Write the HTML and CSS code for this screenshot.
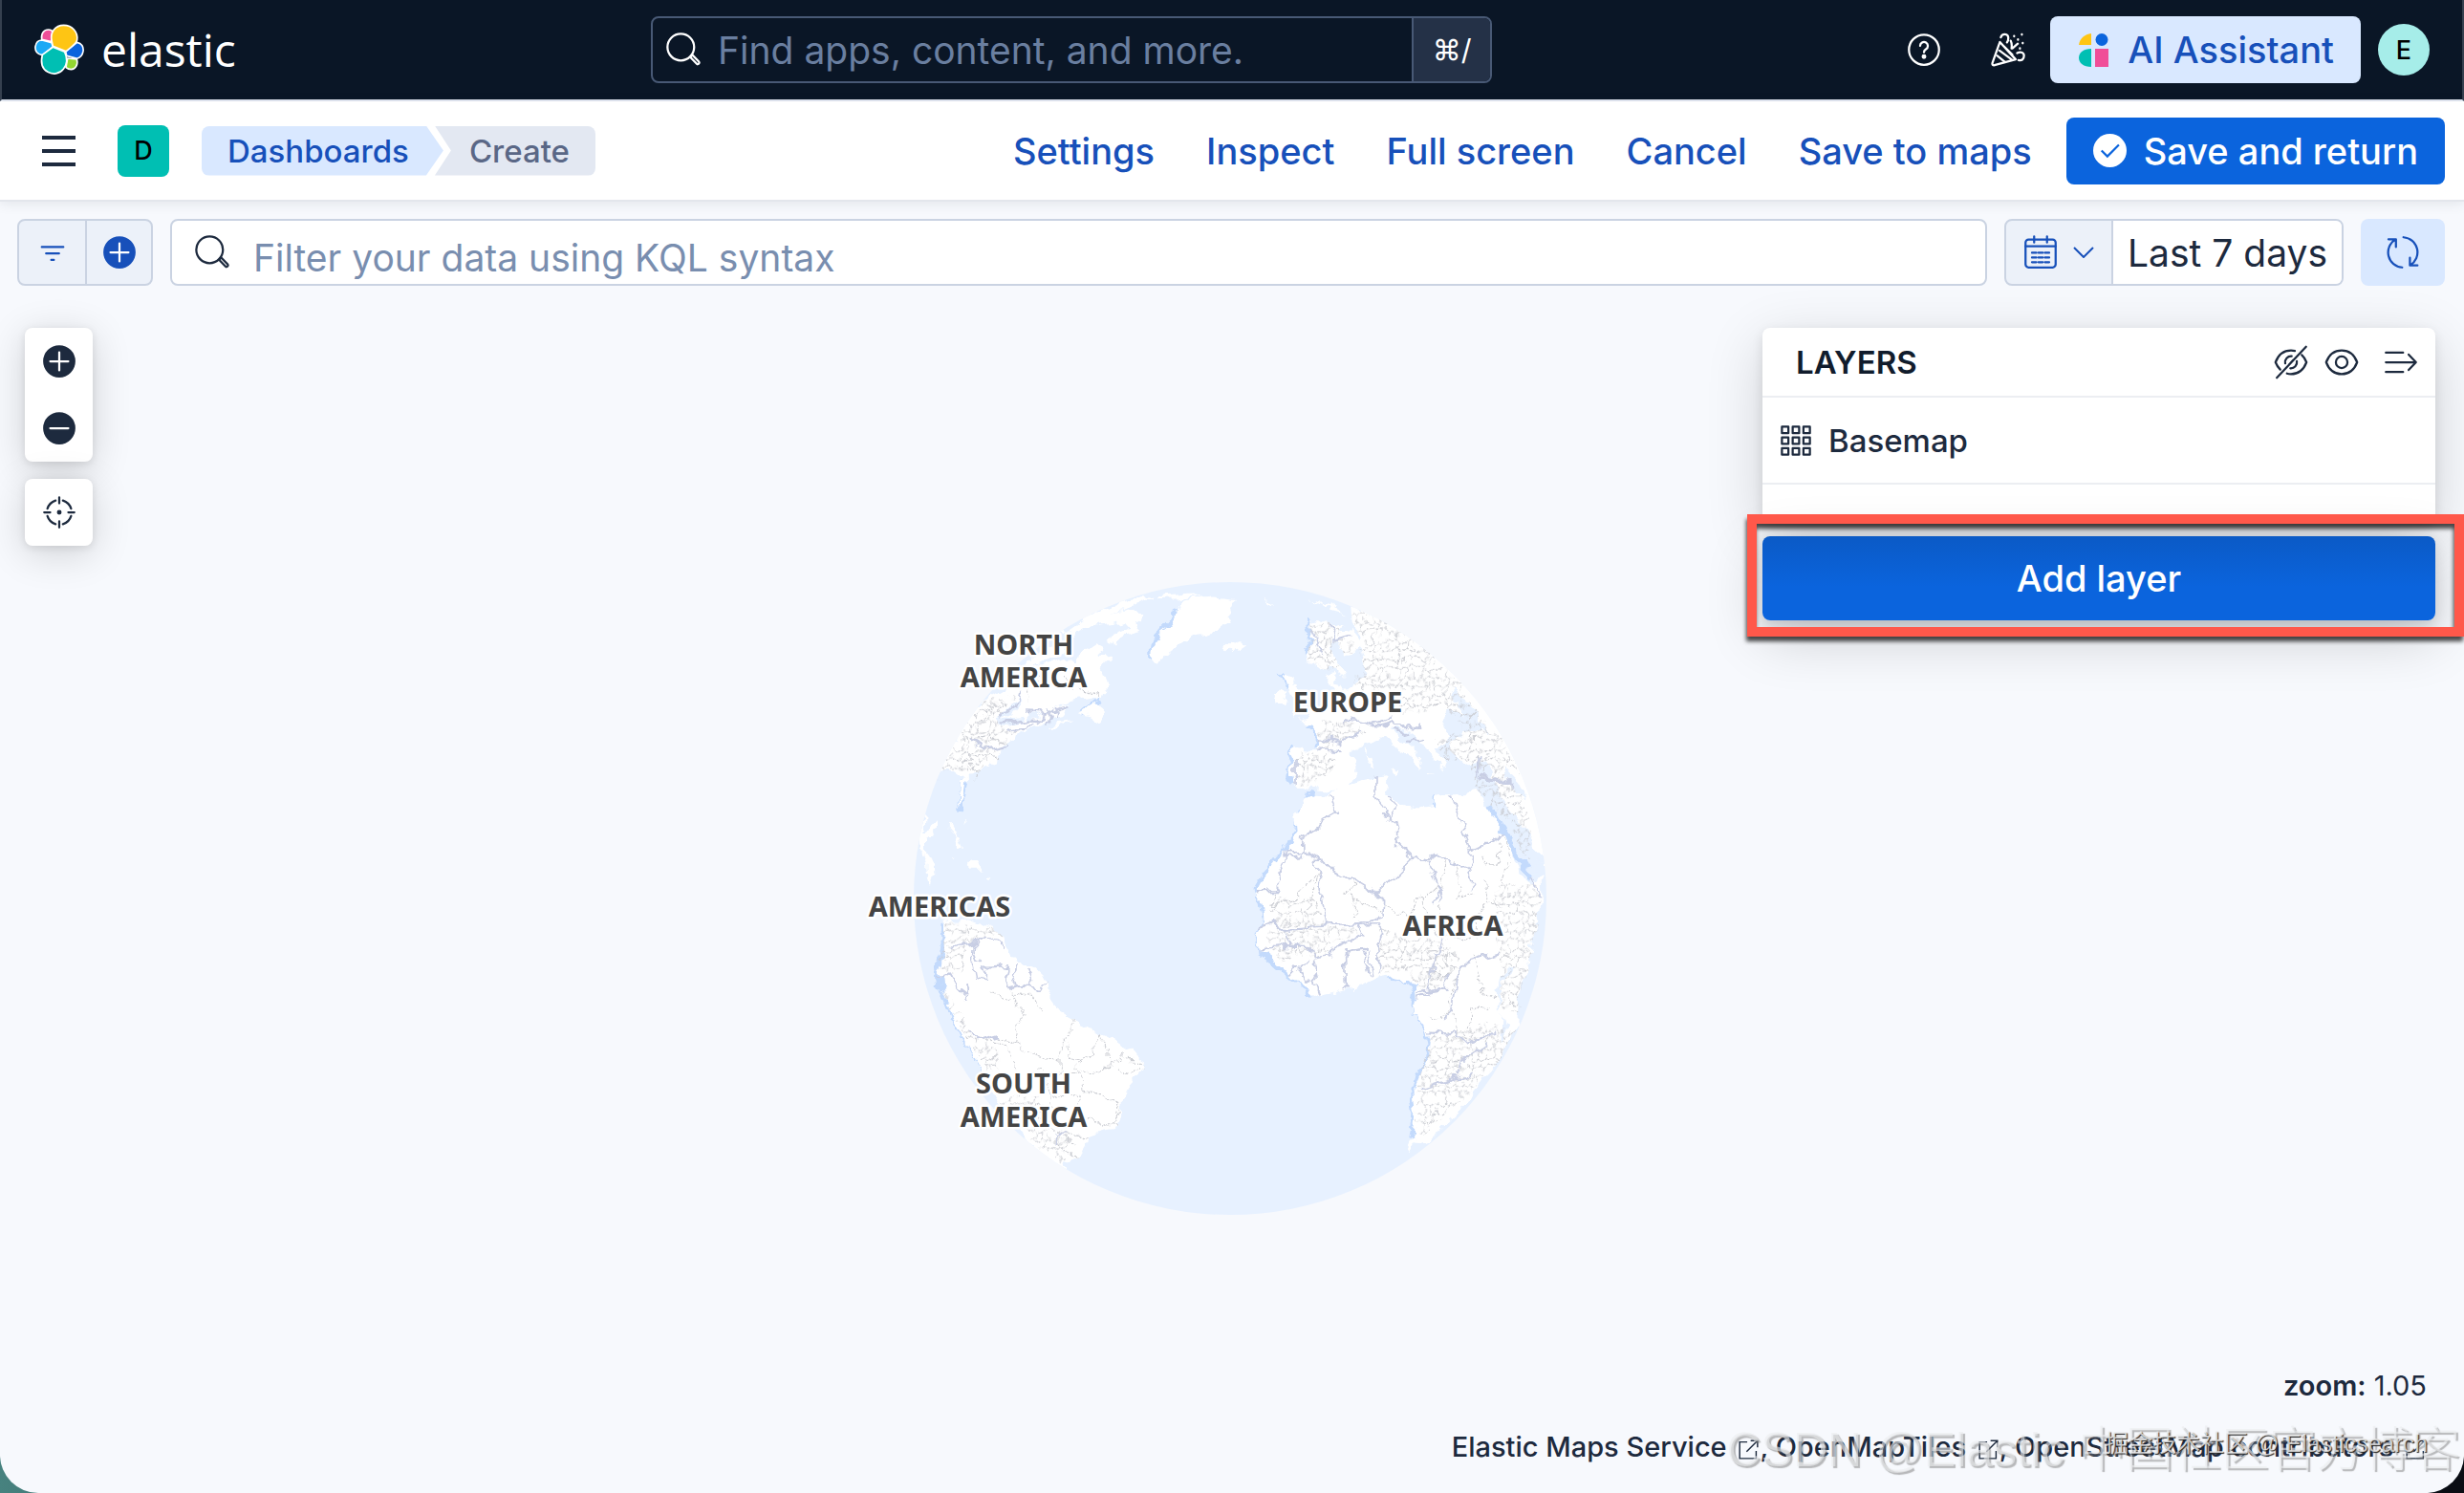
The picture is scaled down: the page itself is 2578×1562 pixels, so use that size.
FILE: index.html
```html
<!DOCTYPE html>
<html lang="en">
<head>
  <meta charset="UTF-8">
  <meta name="viewport" content="width=device-width, initial-scale=1.0">
  <title>Create - Elastic</title>
  <link rel="stylesheet" href="styles.css">
</head>
<body>
<div class="app">
  <header class="header">
    <a class="logo" href="#">
      <svg class="logo-mark" viewBox="46 45 156 160" aria-hidden="true">
        <g stroke="#fff" stroke-width="5" stroke-linejoin="round">
          <path fill="#f04e98" d="M69 93C66 74 76 62 90 62c8 0 12 4 13 8l-4 30z"/>
          <path fill="#1ba9f5" d="M70 95l30 8 4 13-33 26c-15-2-24-12-22-27 2-13 10-20 21-20z"/>
          <path fill="#0b64dd" d="M180 102c14 2 21 14 19 28-2 12-10 20-19 23l-33-9-3-14z"/>
          <path fill="#93d731" d="M150 152l29 3c5 17-4 32-18 32-8 0-12-3-16-6z"/>
          <path fill="#00bfb3" d="M104 117l37 15c9 19 7 40-4 54-11 15-34 18-49 9-20-11-22-34-17-54z"/>
          <path fill="#fec514" d="M101 100C93 70 112 48 138 48c27 0 45 22 42 46-1 12-16 20-34 36l-42-16z"/>
        </g>
      </svg>
      <span class="logo-text">elastic</span>
    </a>
    <div class="search">
      <svg class="icon" viewBox="0 0 16 16" aria-hidden="true"><circle cx="6.8" cy="6.8" r="6.2"/><path d="M11.2 11.4l1-1 3 3.2c.5.6-.5 1.6-1 1z"/></svg>
      <input type="search" aria-label="Find apps, content, and more" placeholder="Find apps, content, and more.">
      <kbd class="search-key">⌘/</kbd>
    </div>
    <div class="header-right">
      <button class="icon-btn" aria-label="Help">
        <svg class="icon" viewBox="0 0 16 16"><circle cx="8" cy="8" r="7"/><path d="M6.2 6.2a1.8 1.8 0 1 1 2.7 1.6c-.6.4-.9.7-.9 1.4"/><circle class="solid" cx="8" cy="11.2" r=".6"/></svg>
      </button>
      <button class="icon-btn" aria-label="What's new">
        <svg class="icon" viewBox="0 0 16 16"><path d="M4.2 4.4L.7 14.2c-.2.7.3 1.2 1 1l9.8-2.7zM4 8.4l6 4.4M3 10.8l3.7 3M6 6.3l4 4M4.6 2.3c.6-2 3.5-2 3.5.3 0 1 0 1.400-.6 2M9.600 7.400c.2-1.400.2-2.400-.4-3.600M10 7.400l2.500-2.200M12.200 9.600c1.800-.9 3.200-.2 3.200 1.200 0 1.600-1 2.400-2.600 2"/><path d="M10.800 1.600v.2M14.400.8v.2M12.600 3.200v.2M14.800 4.800V5M13.500 7.300v.2"/></svg>
      </button>
      <button class="btn btn-light">
        <svg class="ai-icon" viewBox="0 0 31 35" aria-hidden="true"><path fill="#fec514" d="M13 0v12H0C1 5 6 1 13 0z"/><circle fill="#0b64dd" cx="24" cy="6.500" r="6.500"/><path fill="#00bfb3" d="M13 16v19C5 35 0 31 0 25.500S5 16 13 16z"/><path fill="#f04e98" d="M17 16h14v19H17z"/></svg>
        AI Assistant
      </button>
      <button class="avatar avatar-user" aria-label="User menu">E</button>
    </div>
  </header>

  <nav class="nav">
    <button class="menu-btn" aria-label="Toggle navigation"><span></span><span></span><span></span></button>
    <button class="avatar avatar-space" aria-label="Default space">D</button>
    <div class="crumbs">
      <a class="crumb crumb-link" href="#">Dashboards</a>
      <span class="crumb crumb-last">Create</span>
    </div>
    <div class="nav-links">
      <a href="#">Settings</a>
      <a href="#">Inspect</a>
      <a href="#">Full screen</a>
      <a href="#">Cancel</a>
      <a href="#">Save to maps</a>
      <button class="btn btn-primary">
        <svg class="check-icon" viewBox="0 0 16 16" aria-hidden="true"><circle cx="8" cy="8" r="8" fill="#fff"/><path d="M4 8l2.800 2.800L12.300 5.300" fill="none" stroke="#0b64dd"/></svg>
        Save and return
      </button>
    </div>
  </nav>

  <div class="toolbar">
    <div class="group">
      <button class="group-btn" aria-label="Saved queries"><svg class="icon" viewBox="0 0 16 16"><path d="M3 5.500h10M5 8.500h6M7.400 11.500h1.200"/></svg></button>
      <button class="group-btn" aria-label="Add filter"><svg class="icon" viewBox="0 0 16 16"><circle class="solid" cx="8" cy="8" r="7"/><path class="cut" d="M8 3.800v8.400M3.800 8h8.400"/></svg></button>
    </div>
    <div class="query">
      <svg class="icon" viewBox="0 0 16 16" aria-hidden="true"><circle cx="6.800" cy="6.800" r="6.200"/><path d="M11.200 11.400l1-1 3 3.200c.5.6-.5 1.600-1 1z"/></svg>
      <input type="text" aria-label="Query" placeholder="Filter your data using KQL syntax">
    </div>
    <div class="group">
      <button class="group-btn date-btn" aria-label="Date quick select">
        <svg class="icon" viewBox="0 0 16 16"><rect x="1" y="2" width="14" height="13" rx="1.400"/><path d="M1 5.200h14M5 .6v2.800M11 .6v2.800"/><path d="M4 8.200h2M7 8.200h2M10 8.200h2M4 10.400h2M7 10.400h2M10 10.400h2M4 12.600h2M7 12.600h2M10 12.600h2"/></svg>
        <svg class="chevron" viewBox="0 0 22 12"><path d="M1 1l10 10L21 1"/></svg>
      </button>
      <button class="date-value">Last 7 days</button>
    </div>
    <button class="refresh" aria-label="Refresh"><svg class="icon" viewBox="0 0 16 16"><path d="M7.700 15A7 7 0 0 1 4.600 2M1.300 1.900h3.500v3.600M8.300 1a7 7 0 0 1 3.100 13M14.800 14.100h-3.500v-3.600"/></svg></button>
  </div>

  <main class="map">
    <svg class="globe" viewBox="0 0 662 664" role="img" aria-label="World map">
      <defs>
        <clipPath id="disc"><circle cx="331" cy="332" r="331"/></clipPath>
        <!-- roughens coastlines and borders -->
        <filter id="rough" x="0" y="0" width="100%" height="100%">
          <feTurbulence type="fractalNoise" baseFrequency=".07" numOctaves="3" seed="4" result="noise"/>
          <feDisplacementMap in="SourceGraphic" in2="noise" scale="14" xChannelSelector="R" yChannelSelector="G"/>
        </filter>
        <pattern id="cells" width="76" height="62" patternUnits="userSpaceOnUse">
          <path class="district" d="M0 12l12-6 10 8 14-4 8 6 14-8 18 4M12 6L16 0M44 16l-4 14 10 8-2 12M22 14l-6 16 8 10-6 14 2 8M0 36l16-6M24 40l16-10M50 38l16-4 10 2M66 34l-6-14M48 50l14 4 14-6M18 54l14-4 16 0M0 50l18 4M62 54l-4 8M32 50l4 12"/>
        </pattern>
      </defs>
      <circle class="water" cx="331" cy="332" r="331"/>
      <g clip-path="url(#disc)">
       <g filter="url(#rough)">
        <!-- Americas -->
        <g transform="matrix(.3333 0 0 .4591 -56 -28)">
          <path class="coast" d="M262 840l4 50-20 45 5 45 40 70 60 80 50 65M912 230l4-25 30-25 16-12 24-18 4-24M328 520l-13 40-3 30M700 362l56-34"/>
          <g class="land">
            <path d="M930 246l-18-16 4-25 25-22 22-12 22-20 5-24 20-20 50-9 50-3 65 5-10 18 5 10-20 16 8 14-28 14-40 6-40 8-50 22-30 15-22 20z"/>
            <path d="M640 180l60-30 90-32 90-20 40 2-70 20-70 15 60-10 50 5-6 24-24 6 20 14-50 10-20 24-25-12 8-16 47-14 2-14-72 8-70 10-40 17z"/>
            <path d="M930 105l30-13 80-4 30 5-70 10z"/>
            <path d="M520 250l60-34 60-20 20 6-30 22-60 20-40 14z"/>
            <path d="M400 330l70-30 40-10 30-35 100-20 30 15 30-25 45-22 20 7-25 25 45-3-30 23 10 20 10 25-10 20-50 8-55 7-50 15-50 18-35-6 5 17 25-7 45-20 55-10-10 24-50 10-60 20-40 15-40 20-20 30-40 22-40 12-25 20-10 45-13 20 3-30 13-40-28-15-30-5-25 10-10 30-20 30-7 30-3 40 25-10 15-12v22l-30 15v35l23 25 2 20-15 30-10-25-3-25-12-35-7-40 7-40 15-50 30-50 45-60 50-60z"/>
            <path d="M590 398l20-14 55-4-40 12zM690 362l60-32-15 15 25 15-8 22-32-12z"/>
            <path d="M270 615l20 0 25 35 15 25-20-5-10-30zM335 708l10-12 20 4 15 18-30 0zM288 690l10 3-4 6zM394 728l12 2-6 6zM328 602l4 5-5 2z"/>
            <path d="M265 835l35 5 40-8 40 10 40 10 25 13 17 40 28 25 50 15 38 25 27 40-5 20 40 20 50 20 60 20 50 15 50 25 30 20 8 20-18 20-30 25-15 25-3 45-22 27-40 3-45 10-5 20-20 25-30 15-20-4 10 28-75-38-80-52-50-60-50-60-60-80-40-60-40-70-5-45 20-45z"/>
          </g>
          <g class="water">
            <path d="M425 375l45-30 25-25 5 20-30 25-30 10 80-5-5 10-75 12z"/>
          </g>
          <path fill="url(#cells)" d="M340 380l60-50 80-10-50 60 80 20-50 15-50 50-50 30-50-4-60 6-10 20 5-20z"/>
          <path fill="url(#cells)" d="M265 840l150 10 40 20-60 10-60 10-10 60-60 10-20-30 15-40z"/>
          <path fill="url(#cells)" d="M250 980l50 50 50 60 60 20 30 60-40 10-70-80-50-70zM440 1240l120-10 50 80 60 10-30 70-70-36-90-60z"/>
          <g class="district">
            <path d="M475 1000l35 45-20 70-70-20M490 1115l30 20 105 20M470 1000l70 5 22 25 13 15M673 1062l-8 33-25 13-15 42-5 30 70 5M642 1108l15 24 0 16 30 6M750 1090l-12 30 2 20-50 10-10 16 10 18M750 1090l20 30 8 45-60 20-28-10M778 1160l40-8 6-22 10 14 50 14M810 1172l40 10 36-16M690 1180l6 40 54 8 60 22-8 50M810 1250l10 16-20 20M600 1232l90 4M420 1000l16 14 34-6M400 1100l60 20 30 50M500 1190l0 50M690 1230l0 40 40 30 80 0M615 1330l20 24 50 20M610 1316l50 8 50 2M560 1170l40 60 0 70M640 1330l40 20"/>
            <path d="M340 430l60-20 60 20M345 450l90 14M330 470l40 20-10 20M370 400l20-40 40-20M300 470l40-36M640 275l40 30 80 14M560 270l-30 40 0 30"/>
          </g>
          <g class="border">
            <path d="M290 895l40-7 28-3-3 45 10 35 35 5 0-14-10-16 50-2 20-3-5 25 15 30 40-5 50 10 20-25M490 936l-8 20 8 20 22 10M530 950l12 20-12 18M360 885l20-7 60 7 12 15M325 975l15 15-5 25M250 965l30-10 20 25 35 20M345 1080l30 25 60-12M365 885l-2 20 12 22M615 1345l4-20 30-5"/>
            <path d="M525 360l60 4 70-16M440 385l70-8 50 2 50-28M500 310l-12 30-50 30M460 400l60-4 24-10M590 352l10 20-20 12M345 420l60 24 60-8M620 350l-6 24"/>
          </g>
        </g>
        <!-- Europe, Africa, Arabia -->
        <g transform="matrix(.3333 0 0 .4591 324 -28)">
          <path class="coast" d="M270 540l-5 25-25 20-10 50-40 40-40 35-40 50 12 50 8 35-20 20 5 40 70 40 90 52M520 960l35 15 35-5 17 20-5 30 3 20 35 40 10 35-5 40-35 40-12 30 7 50-10 60M215 446l-8 6 12 18-8 40 10 16M302 440l0-26-14-20-30-12M668 545l0 28-10 6M822 570l50 55 34 45 34 40 26 28M185 270l20 30M256 226l20-30-6-44"/>
          <g class="land">
            <path d="M5 212l20-12 20 4 15-6 15 10-20 10-35 4zM130 103l20 2 15 10-20-4zM270 96l60 18 60 20-50-10z"/>
            <path d="M260 228l16-30-6-44 30-6 35 17 35-6 25 10 32 28-4 24-30 8-30-12-6-28-16 16 18 38 26 28-10 10-25-18-30-12-20 12-30-12z"/>
            <path d="M325 270l20-4 14 26 16 16-24 0zM185 274l14-6 20 10-6 14 30 20 14 40-40 16 8-30-20-30zM158 322l22-16 20 10-10 24-26 0z"/>
            <path d="M225 528l-15-28 8-30-15-20 22-10 70 5 8-10-1-25-27-20-35-12 30-8 40-30 40-32 45-3 45-20 10-20-20-25 15-15-25-20 5-20-20-20-5-45 40 8 80 20 100 40 110 60 90 60 90 60 70 80 40 100 20 80 5 60-20 55-20-45-30-50-45-40-50-40-20-30-15-30-20-35-65 10-32-23-13-32 35-20 55-5-5-20-50-20-40-5-25 15 15 30-5 30-30 5 35 40-5 15-35-25-25-30-45-25-40-20-20 0 25 25 45 30 20 25-10 20-15-30-55-25-40-25-40 15-40 10-20 15 15 15 0 30-25 35-50 3z"/>
            <path d="M275 548l45 2 50-20 80-15 65-5-5 35 50 25 70 8 30-3 5-30 95 0 40-5 20 30 50 55 35 65 30 45 35 20 28-25 2 50-15 50-25 90-30 90-5 60-45 70-50 50-90 80-90 65-68 20 16-25 7-60-7-50 17-30 30-40 5-40-15-30-35-35-5-15 13-20-3-35-25-5-25 10-35-20-40 5-40 20-60 7-40 8-45 7-35-17-40-20-30-25-40-25-40-20-5-40 20-15-5-45-15-30 10-15 35-45 40-35 40-40-5-45 25-25z"/>
            <path d="M450 455l16 8 10 22-10-4zM445 438l8 6-2 8zM525 490l34-2-6 14zM640 498l24 4-20 0z"/>
          </g>
          <g class="water">
            <path d="M718 308l30 14 50 50 38 40-22-8-36-20-36-34zM880 486l48 36 22 34-14-4-44-40zM990 690l-20 50 30-14z"/>
            <path d="M370 160l30 6-10 8-36 0z"/>
            <path d="M860 990l10-30 24-14 20-10-14 22-30 20 0 60-6 4zM874 1050l14 20-10 40-6-6z"/>
          </g>
          <path fill="url(#cells)" d="M400 120l130 40 100 50 100 80 60 70 80 50 60 90-50-20-130-80-60-60-60 20-70 0-130-50-30-20 40-20-10-40 10-30-30-30z"/>
          <path fill="url(#cells)" d="M270 155l60 6 60 30 24 30-34 4-26-20-10 16 36 50-30-10-80-6-6-40zM300 380l90-4 60 30-50 12-70 34-20-4zM220 450l70 0 60 10-10 40-30 22-90 4z"/>
          <path fill="url(#cells)" d="M665 420l60-20 100 30 60 70 60 60 30 100-20 40-60-90-90-60-40-80-70-4z"/>
          <path fill="url(#cells)" d="M490 850l80 20 120 10 60 40-50 50-60 40-60-60-96 10z"/>
          <path fill="url(#cells)" d="M860 740l70 20 60-10 0 80-40 120-20 100-60-20 0-90-20-90z"/>
          <path fill="url(#cells)" d="M650 1095l100-10 80-20 90 20-50 70-120 90-144 90 6-60-6-60z"/>
          <path fill="url(#cells)" d="M150 780l140 10 36 60 80 0 20 20-80 10-10 40-60 0-60-20-20 40-60-50z"/>
          <g class="district">
            <path d="M155 765l0 40 70-20 70-60M295 720l-35 110M380 775l40-30M400 770l10 60M400 790l90 20M500 790l60 40 60-50 50-16M625 770l0 60M700 690l-20 80M730 700l10 80 50-8M860 660l10 40-50 10-14-20M820 740l10 60 50-10M690 800l-20 60 60 20 70-10M735 945l-24 70 20 80M790 910l10 80 60 20M720 1040l-70 20M760 1110l20-70 60-10M640 960l60 0 20-20M690 880l0 50 50 20M880 650l20 60-30 40M820 800l-30 20 0 40"/>
          </g>
          <g class="border">
            <path d="M330 550l10 20 15 20-35 15-30 22-45 22 2 38-57 3-18 47 0 24-30 0M190 690l0-12 50 0M245 672l235 103M290 703l30 0M290 703l37 140-127 9M480 775l115-83-50-32 0-30-15-30 10-30-25-20M480 505l0 50 50 50M595 692l45 6 10-13 125 30 10 50M712 548l63 127 105-35M775 675l0 40M480 775l17 5-2 45-75 18M645 700l27 65-12 30M108 767l68 0 0-14"/>
            <path d="M327 843l60 2 33-2 20 27-90 25-10 23-55 4-20-27-55 0-6-42M110 850l50-12 40 14M110 898l60-4 40 2M280 925l10 35-10 15 15 30M265 925l-30 20 20 30 20 0M230 940l-22 20M385 905l-5 15 2 70M385 905l65-6M440 905l15 55M455 905l12 55M490 880l-3 80M420 845l70-2 10 20-12 20M610 1000l90-10 0-30M735 945l25-15 100-25M735 945l-15 95-30 20M645 1090l60 5 15-10 40 30 90-20M735 1185l10-30 85-40M615 1220l125-30 40-10M610 1010l30-6 0-14M690 870l-30 60-20 60M672 765l10 30"/>
            <path d="M225 470l0 56M295 445l76 4M302 420l70 12 60-30M390 375l100 16 50-10 50 24 30-20M470 385l60-14M540 395l40 20M580 430l50-10M800 465l10 40 100 20M272 170l40 60M330 165l20 30 50-10M810 460l-10 44M905 520l-90-20M965 735l30 45"/>
          </g>
        </g>
       </g>
      </g>
      <g class="labels">
        <text x="115" y="77">NORTH</text>
        <text x="115" y="111">AMERICA</text>
        <text x="454" y="137">EUROPE</text>
        <text x="27" y="351">AMERICAS</text>
        <text x="564" y="371">AFRICA</text>
        <text x="115" y="536">SOUTH</text>
        <text x="115" y="571">AMERICA</text>
      </g>
    </svg>

    <div class="controls">
      <div class="control-box">
        <button class="control" aria-label="Zoom in"><svg class="icon" viewBox="0 0 16 16"><circle class="solid" cx="8" cy="8" r="7"/><path class="cut" d="M8 3.800v8.400M3.800 8h8.400"/></svg></button>
        <button class="control" aria-label="Zoom out"><svg class="icon" viewBox="0 0 16 16"><circle class="solid" cx="8" cy="8" r="7"/><path class="cut" d="M3.800 8h8.400"/></svg></button>
      </div>
      <div class="control-box">
        <button class="control" aria-label="Fit to data bounds"><svg class="icon" viewBox="0 0 16 16"><path d="M8 1v2.800M8 12.200V15M1 8h2.800M12.200 8H15M2.500 6.300a5.800 5.800 0 0 1 3.800-3.800M9.700 2.500a5.800 5.800 0 0 1 3.800 3.800M13.500 9.700a5.800 5.800 0 0 1-3.800 3.800M6.300 13.500a5.800 5.800 0 0 1-3.800-3.800"/><circle class="solid" cx="8" cy="8" r=".6"/></svg></button>
      </div>
    </div>

    <aside class="side">
      <section class="layers">
        <div class="layers-head">
          <h2>LAYERS</h2>
          <button class="icon-btn" aria-label="Hide all layers"><svg class="icon" viewBox="0 0 16 16"><path d="M9.800 2.700A8 8 0 0 0 8 2.500C4.500 2.500 2 4.800.8 8c.5 1.300 1.200 2.400 2.200 3.400M13 4.600c1 .9 1.700 2 2.200 3.400-1.200 3.200-3.700 5.500-7.200 5.500-.7 0-1.300-.1-1.900-.3M8.300 5.200A2.800 2.800 0 0 0 5.300 8.500M10.700 7.500A2.800 2.800 0 0 1 7.700 10.800M7 9.200l2-2.200M1.400 15.200L15 .8"/></svg></button>
          <button class="icon-btn" aria-label="Show all layers"><svg class="icon" viewBox="0 0 16 16"><path d="M8 2.500C4.500 2.500 2 4.800.8 8 2 11.200 4.500 13.500 8 13.500s6-2.300 7.200-5.500C14 4.800 11.500 2.500 8 2.500z"/><circle cx="8" cy="8" r="2.700"/></svg></button>
          <button class="icon-btn collapse" aria-label="Collapse layers panel"><svg class="icon" viewBox="0 0 16 16"><path d="M1 3.500h8M1 8h14M1 12.500h8M11.600 4.400L15 8l-3.400 3.600"/></svg></button>
        </div>
        <div class="layer">
          <svg class="icon" viewBox="0 0 16 16" aria-hidden="true"><path d="M1.500 1.500h3v3h-3zM6.500 1.500h3v3h-3zM11.500 1.500h3v3h-3zM1.500 6.500h3v3h-3zM6.500 6.500h3v3h-3zM11.500 6.500h3v3h-3zM1.500 11.500h3v3h-3zM6.500 11.500h3v3h-3zM11.500 11.500h3v3h-3z"/></svg>
          <button class="layer-name">Basemap</button>
        </div>
      </section>
      <button class="btn btn-primary add-layer">Add layer</button>
    </aside>

    <footer class="map-foot">
      <p><strong>zoom:</strong> 1.05</p>
      <p class="attribution">
        <a href="#">Elastic Maps Service <svg class="ext" viewBox="0 0 16 16" aria-hidden="true"><path d="M7 2.500H1.500v12h12V9M9.500 1.500h5v5M14.500 1.500L6.500 9.500"/></svg></a>,
        <a href="#">OpenMapTiles <svg class="ext" viewBox="0 0 16 16" aria-hidden="true"><path d="M7 2.500H1.500v12h12V9M9.500 1.500h5v5M14.500 1.500L6.500 9.500"/></svg></a>,
        <a href="#">OpenStreetMap contributors <svg class="ext" viewBox="0 0 16 16" aria-hidden="true"><path d="M7 2.500H1.500v12h12V9M9.500 1.500h5v5M14.500 1.500L6.500 9.500"/></svg></a>
      </p>
    </footer>
  </main>
</div>
<span class="mark mark-large">CSDN @Elastic 中国社区官方博客</span>
<span class="mark mark-small">掘金技术社区 @ Elasticsearch</span>
</body>
</html>
```
FILE: styles.css
```css
* {
  box-sizing: border-box;
}
body {
  margin: 0;
  position: relative;
  background: linear-gradient(to right, #47827f, #0a0d14 30%);
  color: #1d2a3e;
  font-family: Inter, "Liberation Sans", sans-serif;
  font-size: 33px;
}
button, input {
  font: inherit;
  color: inherit;
  border: 0;
  padding: 0;
  background: none;
}
button {
  cursor: pointer;
}
a {
  color: inherit;
  text-decoration: none;
}
p, h2 {
  margin: 0;
}
.app {
  display: flex;
  flex-direction: column;
  min-height: 100vh;
  overflow: hidden;
  background: #f7f9fd;
  border-radius: 0 0 40px 40px;
}
.icon {
  display: block;
  flex: none;
  width: 36px;
  height: 36px;
  fill: none;
  stroke: currentColor;
  stroke-linecap: round;
  stroke-linejoin: round;
}
.icon .solid {
  fill: currentColor;
}
.icon .cut {
  stroke: #fff;
}
.icon-btn {
  display: flex;
}

/* header */
.header {
  display: flex;
  align-items: center;
  justify-content: space-between;
  height: 106px;
  padding: 0 34px;
  background: #0a1626;
  color: #fff;
  border: solid #35404f;
  border-width: 0 2px;
  border-bottom: 2px solid #e3e8f2;
}
.logo {
  display: flex;
  align-items: center;
  gap: 18px;
}
.logo-mark {
  width: 52px;
  height: 54px;
}
.logo-text {
  font-family: "Open Sans", "Noto Sans", sans-serif;
  font-size: 48px;
  line-height: 54px;
}
.search {
  display: flex;
  align-items: center;
  flex: 0 1 880px;
  height: 70px;
  padding-left: 14px;
  border: 2px solid #485975;
  border-radius: 8px;
  overflow: hidden;
}
.search input {
  flex: 1;
  min-width: 0;
  padding-left: 18px;
  font-size: 39px;
  outline: none;
}
.search input::placeholder {
  color: #6a7fa0;
}
.search-key {
  display: flex;
  align-items: center;
  justify-content: center;
  align-self: stretch;
  width: 82px;
  background: #243147;
  border-left: 2px solid #485975;
  font-family: Inter, "DejaVu Sans", sans-serif;
  font-size: 30px;
}
.header-right {
  display: flex;
  align-items: center;
}
.header-right .icon-btn {
  margin-right: 52px;
}
.header-right .icon-btn + .icon-btn {
  margin-right: 26px;
}
.btn {
  display: flex;
  align-items: center;
  justify-content: center;
  gap: 18px;
  height: 70px;
  padding: 0 28px;
  border-radius: 8px;
  font-size: 38px;
  font-weight: 500;
  white-space: nowrap;
}
.btn-light {
  background: #d9e8ff;
  color: #1750ba;
}
.btn-primary {
  background: #0b64dd;
  color: #fff;
}
.ai-icon, .check-icon {
  width: 35px;
  height: 35px;
}
.avatar {
  width: 54px;
  height: 54px;
  color: #000;
  font-size: 27px;
  font-weight: 500;
}
.avatar-user {
  margin-left: 18px;
  border-radius: 50%;
  background: #a6ede9;
}
.avatar-space {
  margin-left: 44px;
  border-radius: 8px;
  background: #00bfb3;
}

/* navigation bar */
.nav {
  display: flex;
  align-items: center;
  height: 105px;
  padding: 0 20px 0 44px;
  background: #fff;
  border-bottom: 2px solid #e3e6ec;
  box-shadow: 0 2px 12px rgba(40, 50, 70, 0.1);
}
.menu-btn {
  display: flex;
  flex-direction: column;
  gap: 10px;
  width: 35px;
}
.menu-btn span {
  height: 4px;
  background: #1d2a3e;
}
.crumbs {
  display: flex;
  margin-left: 34px;
  font-weight: 500;
}
.crumb {
  height: 52px;
  line-height: 52px;
}
.crumb-link {
  padding: 0 36px 0 27px;
  background: #d9e8ff;
  color: #1750ba;
  border-radius: 8px 0 0 8px;
  clip-path: polygon(0 0, calc(100% - 18px) 0, 100% 50%, calc(100% - 18px) 100%, 0 100%);
}
.crumb-last {
  margin-left: -9px;
  padding: 0 27px 0 36px;
  background: #e3e8f2;
  color: #5a6786;
  border-radius: 0 8px 8px 0;
  clip-path: polygon(0 0, 100% 0, 100% 100%, 0 100%, 17px 50%);
}
.nav-links {
  display: flex;
  align-items: center;
  gap: 54px;
  margin-left: auto;
  color: #1750ba;
  font-size: 38px;
  font-weight: 500;
  white-space: nowrap;
}
.nav-links .btn {
  margin-left: -18px;
}

/* query bar */
.toolbar {
  display: flex;
  gap: 18px;
  padding: 18px 20px 18px 18px;
}
.group {
  display: flex;
  height: 70px;
  border: 2px solid #cad3e2;
  border-radius: 8px;
  overflow: hidden;
  background: #ecf1f9;
}
.group-btn {
  display: flex;
  align-items: center;
  justify-content: center;
  width: 69px;
  color: #1750ba;
}
.group > * + * {
  border-left: 2px solid #cad3e2;
}
.query {
  display: flex;
  align-items: center;
  flex: 1;
  height: 70px;
  padding-left: 24px;
  background: #fff;
  border: 2px solid #cad3e2;
  border-radius: 8px;
}
.query input {
  flex: 1;
  min-width: 0;
  padding: 10px 0 0 25px;
  font-size: 39px;
  outline: none;
}
.query input::placeholder {
  color: #798eaf;
}
.group .date-btn {
  width: 110px;
  gap: 16px;
}
.chevron {
  width: 22px;
  height: 12px;
  fill: none;
  stroke: currentColor;
  stroke-width: 2;
}
.date-value {
  padding: 0 15px;
  background: #fff;
  font-size: 39px;
}
.refresh {
  display: flex;
  align-items: center;
  justify-content: center;
  width: 88px;
  border-radius: 8px;
  background: #d9e8ff;
  color: #1750ba;
}

/* map */
.map {
  position: relative;
  display: flex;
  flex: 1;
  align-items: center;
  justify-content: center;
  padding-right: 4px;
}
.globe {
  width: 662px;
  height: 664px;
  overflow: visible;
}
.water {
  fill: #e7f1ff;
}
.land {
  fill: #fff;
}
.border, .coast, .district {
  fill: none;
  stroke-linejoin: round;
}
.border {
  stroke: #c8cee4;
  stroke-width: 5;
}
.coast {
  stroke: #c3dafc;
  stroke-width: 18;
}
.district {
  stroke: #cbcdd3;
  stroke-width: 3;
  stroke-dasharray: 7 4;
}
.labels {
  fill: #444;
  stroke: #fff;
  stroke-width: 5;
  stroke-linejoin: round;
  paint-order: stroke;
  font-family: "Noto Sans", sans-serif;
  font-size: 29px;
  font-weight: 700;
  text-anchor: middle;
}
.controls {
  position: absolute;
  top: 26px;
  left: 26px;
  display: flex;
  flex-direction: column;
  gap: 18px;
}
.control-box {
  background: #fff;
  border-radius: 8px;
  box-shadow: 0 2px 8px rgba(0, 0, 0, 0.1), 0 8px 40px rgba(0, 0, 0, 0.16);
}
.control {
  display: flex;
  align-items: center;
  justify-content: center;
  width: 71px;
  height: 70px;
}
.side {
  position: absolute;
  top: 26px;
  right: 30px;
  display: flex;
  flex-direction: column;
  gap: 14px;
  width: 704px;
}
.layers {
  background: #fff;
  border-radius: 8px;
  padding-bottom: 40px;
  box-shadow: 0 4px 12px rgba(0, 0, 0, 0.1), 0 16px 60px rgba(0, 0, 0, 0.16);
}
.layers-head {
  display: flex;
  align-items: center;
  height: 73px;
  padding: 0 18px 0 35px;
  border-bottom: 2px solid #eceef2;
}
.layers-head h2 {
  margin-right: auto;
  color: #111c2c;
  font-size: 33px;
  font-weight: 600;
}
.layers-head .icon-btn {
  margin-left: 17px;
}
.layers-head .collapse {
  margin-left: 26px;
}
.layer {
  display: flex;
  align-items: center;
  gap: 16px;
  height: 91px;
  padding-left: 17px;
  border-bottom: 2px solid #eceef2;
}
.layer-name {
  font-weight: 500;
}
.add-layer {
  position: relative;
  height: 88px;
  background: linear-gradient(#0b5ac6, #0b64dd 60%);
  box-shadow: 0 16px 60px rgba(0, 0, 0, 0.2), 0 6px 14px rgba(0, 0, 0, 0.12);
}
/* red frame that calls out the button */
.add-layer::after {
  content: "";
  position: absolute;
  inset: -23px -30px -17px -16px;
  border: 10px solid #ff584a;
  filter: drop-shadow(-1px 5px 2px rgba(0, 0, 0, 0.7));
}
.map-foot {
  position: absolute;
  right: 39px;
  bottom: 30px;
  font-size: 29px;
  line-height: 36px;
  text-align: right;
}
.map-foot strong {
  font-weight: 600;
}
.attribution {
  margin-top: 28px;
  font-weight: 500;
}
.ext {
  width: 23px;
  height: 23px;
  margin-left: 4px;
  vertical-align: -4px;
  fill: none;
  stroke: currentColor;
}
.mark {
  position: absolute;
  white-space: nowrap;
  font-family: "Liberation Sans", "Noto Sans CJK SC", sans-serif;
  pointer-events: none;
}
.mark-large {
  right: 4px;
  bottom: 15px;
  color: rgba(235, 236, 238, 0.6);
  font-size: 50px;
  font-weight: 300;
  line-height: 60px;
  text-shadow: 2px 2px 1px rgba(120, 120, 120, 0.5);
}
.mark-small {
  right: 38px;
  bottom: 36px;
  color: rgba(240, 240, 240, 0.8);
  font-size: 25px;
  line-height: 32px;
  text-shadow: 1px 1px 1px #222;
}
```
